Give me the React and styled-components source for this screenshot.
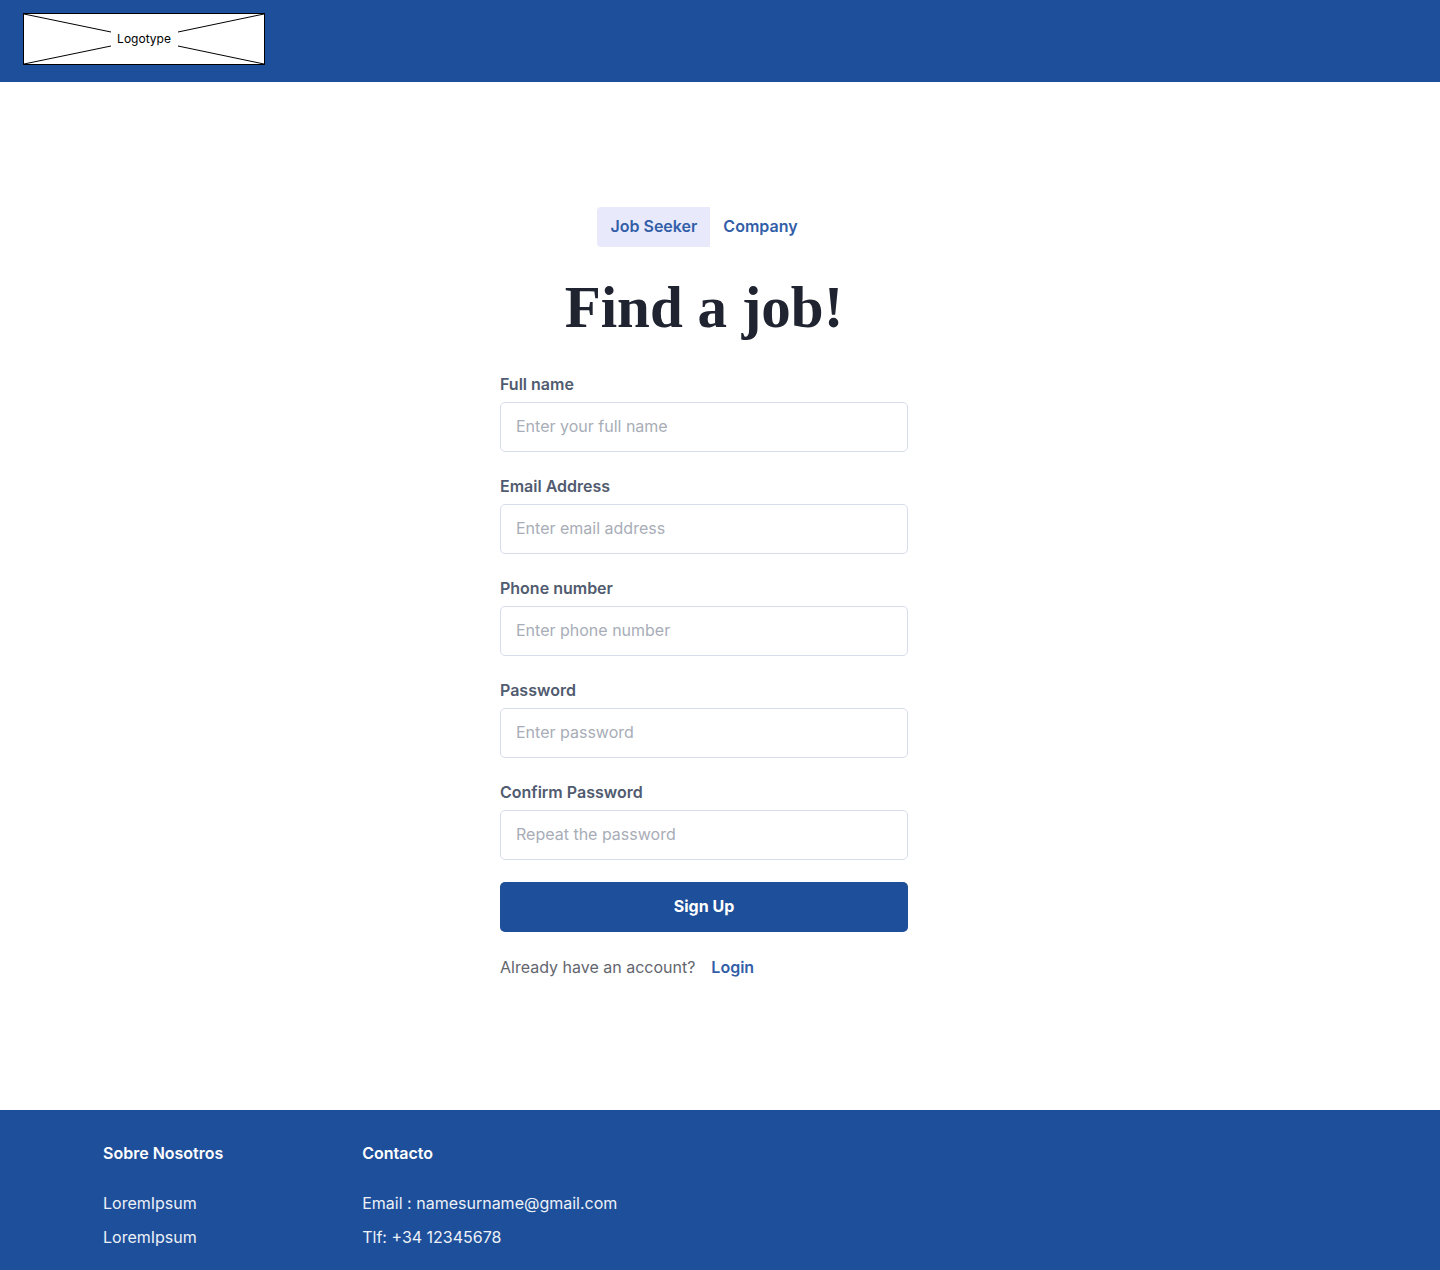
import React, { useState } from "react";
import styled, { createGlobalStyle } from "styled-components";

const GlobalStyle = createGlobalStyle`
  *, *::before, *::after { box-sizing: border-box; }
  body {
    margin: 0;
    background: #ffffff;
    font-family: Inter, "Liberation Sans", sans-serif;
    font-size: 16px;
    line-height: 26px;
  }
  button, input { font: inherit; }
`;

const Page = styled.div`
  min-height: 100vh;
  display: flex;
  flex-direction: column;
`;

const Header = styled.header`
  background: #1e4f9a;
  padding: 13px 23px 17px;
`;

const LogoLink = styled.a`
  display: grid;
  width: 242px;
  height: 52px;
  background: #ffffff;
  border: 1px solid #000000;
  color: #000000;
  font-size: 12px;
  line-height: 16px;
  text-decoration: none;

  > * { grid-area: 1 / 1; }
`;

const LogoCross = styled.svg`
  width: 100%;
  height: 100%;
  fill: none;
  stroke: #000000;
`;

const LogoText = styled.span`
  place-self: center;
`;

const Main = styled.main`
  flex: 1;
  display: flex;
  flex-direction: column;
  align-items: center;
  padding: 125px 32px 130px 0;
`;

const Tabs = styled.div`
  display: flex;
`;

const Tab = styled.button`
  height: 40px;
  padding: 6px 13px 8px;
  border: 0;
  border-radius: 4px 0 0 4px;
  background: ${({ $active }) => ($active ? "#e9e9fc" : "transparent")};
  color: #325ea8;
  font-weight: 600;
  cursor: pointer;
`;

const Title = styled.h1`
  margin: 28px 0 33px;
  color: #202430;
  font-family: "Liberation Serif", serif;
  font-size: 59px;
  font-weight: 700;
  line-height: 64px;
`;

const Form = styled.form`
  width: 100%;
  max-width: 408px;
  display: flex;
  flex-direction: column;
  gap: 22px;
`;

const Field = styled.div`
  display: flex;
  flex-direction: column;
  gap: 6px;
`;

const Label = styled.label`
  color: #515b6f;
  font-weight: 600;
  line-height: 24px;
`;

const Input = styled.input`
  width: 100%;
  height: 50px;
  padding: 10px 15px 12px;
  border: 1px solid #d6ddeb;
  border-radius: 5px;
  background: #ffffff;
  color: #202430;

  &::placeholder { color: #a8adb7; opacity: 1; }
`;

const Submit = styled.button`
  height: 50px;
  padding: 10px 24px 12px;
  border: 0;
  border-radius: 5px;
  background: #1e4f9a;
  color: #ffffff;
  font-weight: 700;
  cursor: pointer;
`;

const LoginRow = styled.p`
  display: flex;
  gap: 16px;
  margin: 0;
  color: #63666e;
`;

const LoginLink = styled.a`
  color: #325ea8;
  font-weight: 600;
  text-decoration: none;
`;

const Footer = styled.footer`
  display: flex;
  gap: 139px;
  padding: 30px 103px 20px;
  background: #1e4f9a;
  color: #ffffff;
`;

const FooterHeading = styled.h2`
  margin: 0 0 24px;
  font-size: 16px;
  font-weight: 600;
`;

const FooterList = styled.ul`
  display: grid;
  gap: 8px;
  margin: 0;
  padding: 0;
  list-style: none;
  color: #edf1f8;
`;

const fields = [
  { id: "fullName", label: "Full name", type: "text", placeholder: "Enter your full name" },
  { id: "email", label: "Email Address", type: "email", placeholder: "Enter email address" },
  { id: "phone", label: "Phone number", type: "tel", placeholder: "Enter phone number" },
  { id: "password", label: "Password", type: "password", placeholder: "Enter password" },
  { id: "confirm", label: "Confirm Password", type: "password", placeholder: "Repeat the password" },
];

const footerColumns = [
  { title: "Sobre Nosotros", items: ["LoremIpsum", "LoremIpsum"] },
  { title: "Contacto", items: ["Email : namesurname@gmail.com", "Tlf: +34 12345678"] },
];

export default function App() {
  const [role, setRole] = useState("Job Seeker");

  return (
    <Page>
      <GlobalStyle />
      <Header>
        <LogoLink href="#">
          <LogoCross viewBox="0 0 240 50" aria-hidden="true">
            <path d="M0 0L87 18M0 50L87 32M240 0L154 18M240 50L154 32" />
          </LogoCross>
          <LogoText>Logotype</LogoText>
        </LogoLink>
      </Header>
      <Main>
        <Tabs>
          {["Job Seeker", "Company"].map((name) => (
            <Tab
              key={name}
              type="button"
              aria-pressed={role === name}
              $active={role === name}
              onClick={() => setRole(name)}
            >
              {name}
            </Tab>
          ))}
        </Tabs>
        <Title>Find a job!</Title>
        <Form onSubmit={(event) => event.preventDefault()}>
          {fields.map(({ id, label, type, placeholder }) => (
            <Field key={id}>
              <Label htmlFor={id}>{label}</Label>
              <Input id={id} name={id} type={type} placeholder={placeholder} />
            </Field>
          ))}
          <Submit type="submit">Sign Up</Submit>
          <LoginRow>
            Already have an account?
            <LoginLink href="#login">Login</LoginLink>
          </LoginRow>
        </Form>
      </Main>
      <Footer>
        {footerColumns.map(({ title, items }) => (
          <section key={title}>
            <FooterHeading>{title}</FooterHeading>
            <FooterList>
              {items.map((item, index) => (
                <li key={index}>{item}</li>
              ))}
            </FooterList>
          </section>
        ))}
      </Footer>
    </Page>
  );
}
